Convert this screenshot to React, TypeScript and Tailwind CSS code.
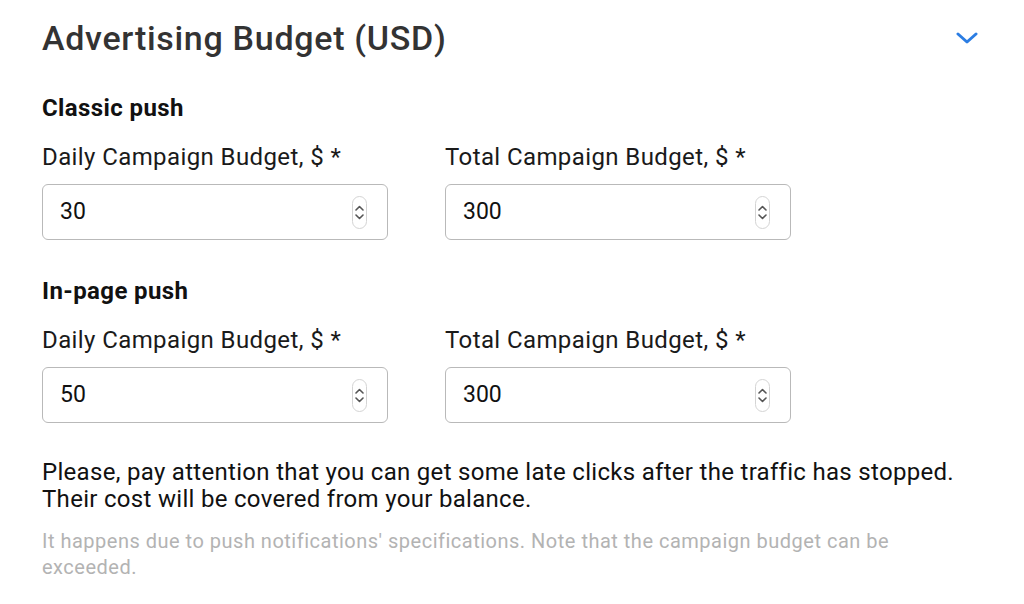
import type { FC } from 'react';

const Spinner: FC = () => (
  <div className="flex h-[33px] w-[15px] flex-col items-center justify-center gap-[3px] rounded-full border border-[#d4d4d4] bg-white">
    <svg width="9" height="6" viewBox="0 0 9 6" fill="none">
      <path d="M1 5 L4.5 1.5 L8 5" stroke="#555" strokeWidth="1.6" strokeLinecap="round" strokeLinejoin="round" />
    </svg>
    <svg width="9" height="6" viewBox="0 0 9 6" fill="none">
      <path d="M1 1 L4.5 4.5 L8 1" stroke="#555" strokeWidth="1.6" strokeLinecap="round" strokeLinejoin="round" />
    </svg>
  </div>
);

const BudgetField: FC<{ label: string; value: string }> = ({ label, value }) => (
  <div className="flex w-[346px] flex-col">
    <label className="whitespace-nowrap text-[24px] leading-[28px] tracking-[0.4px] text-[#1a1a1a]">{label}</label>
    <div className="mt-[13px] flex h-[56px] items-center justify-between rounded-[6px] border border-[#b9b9b9] pl-[17px] pr-[20px]">
      <span className="text-[23px] text-[#111]">{value}</span>
      <Spinner />
    </div>
  </div>
);

const BudgetGroup: FC<{ title: string; daily: string; total: string }> = ({ title, daily, total }) => (
  <div>
    <h3 className="text-[24px] font-bold leading-[28px] tracking-[0.4px] text-[#111]">{title}</h3>
    <div className="mt-[21px] flex gap-[57px]">
      <BudgetField label="Daily Campaign Budget, $ *" value={daily} />
      <BudgetField label="Total Campaign Budget, $ *" value={total} />
    </div>
  </div>
);

const App = () => {
  return (
    <div className="min-h-screen bg-white pl-[42px] pr-[46px] pt-[18px] font-['Roboto',sans-serif]">
      <div className="flex items-center justify-between">
        <h2 className="text-[34px] font-medium leading-[40px] tracking-[0.7px] text-[#333]">Advertising Budget (USD)</h2>
        <svg width="22" height="12" viewBox="0 0 22 12" fill="none">
          <path d="M2 2 L11 10 L20 2" stroke="#2b7de3" strokeWidth="3" strokeLinecap="round" strokeLinejoin="round" />
        </svg>
      </div>

      <div className="mt-[36px]">
        <BudgetGroup title="Classic push" daily="30" total="300" />
      </div>
      <div className="mt-[37px]">
        <BudgetGroup title="In-page push" daily="50" total="300" />
      </div>

      <p className="mt-[36px] whitespace-nowrap text-[24px] leading-[27px] tracking-[0.3px] text-[#111]">
        Please, pay attention that you can get some late clicks after the traffic has stopped.
        <br />
        Their cost will be covered from your balance.
      </p>
      <p className="mt-[15px] max-w-[860px] text-[20px] leading-[26px] tracking-[0.5px] text-[#b3b3b3]">
        It happens due to push notifications' specifications. Note that the campaign budget can be exceeded.
      </p>
    </div>
  );
};

export default App;
